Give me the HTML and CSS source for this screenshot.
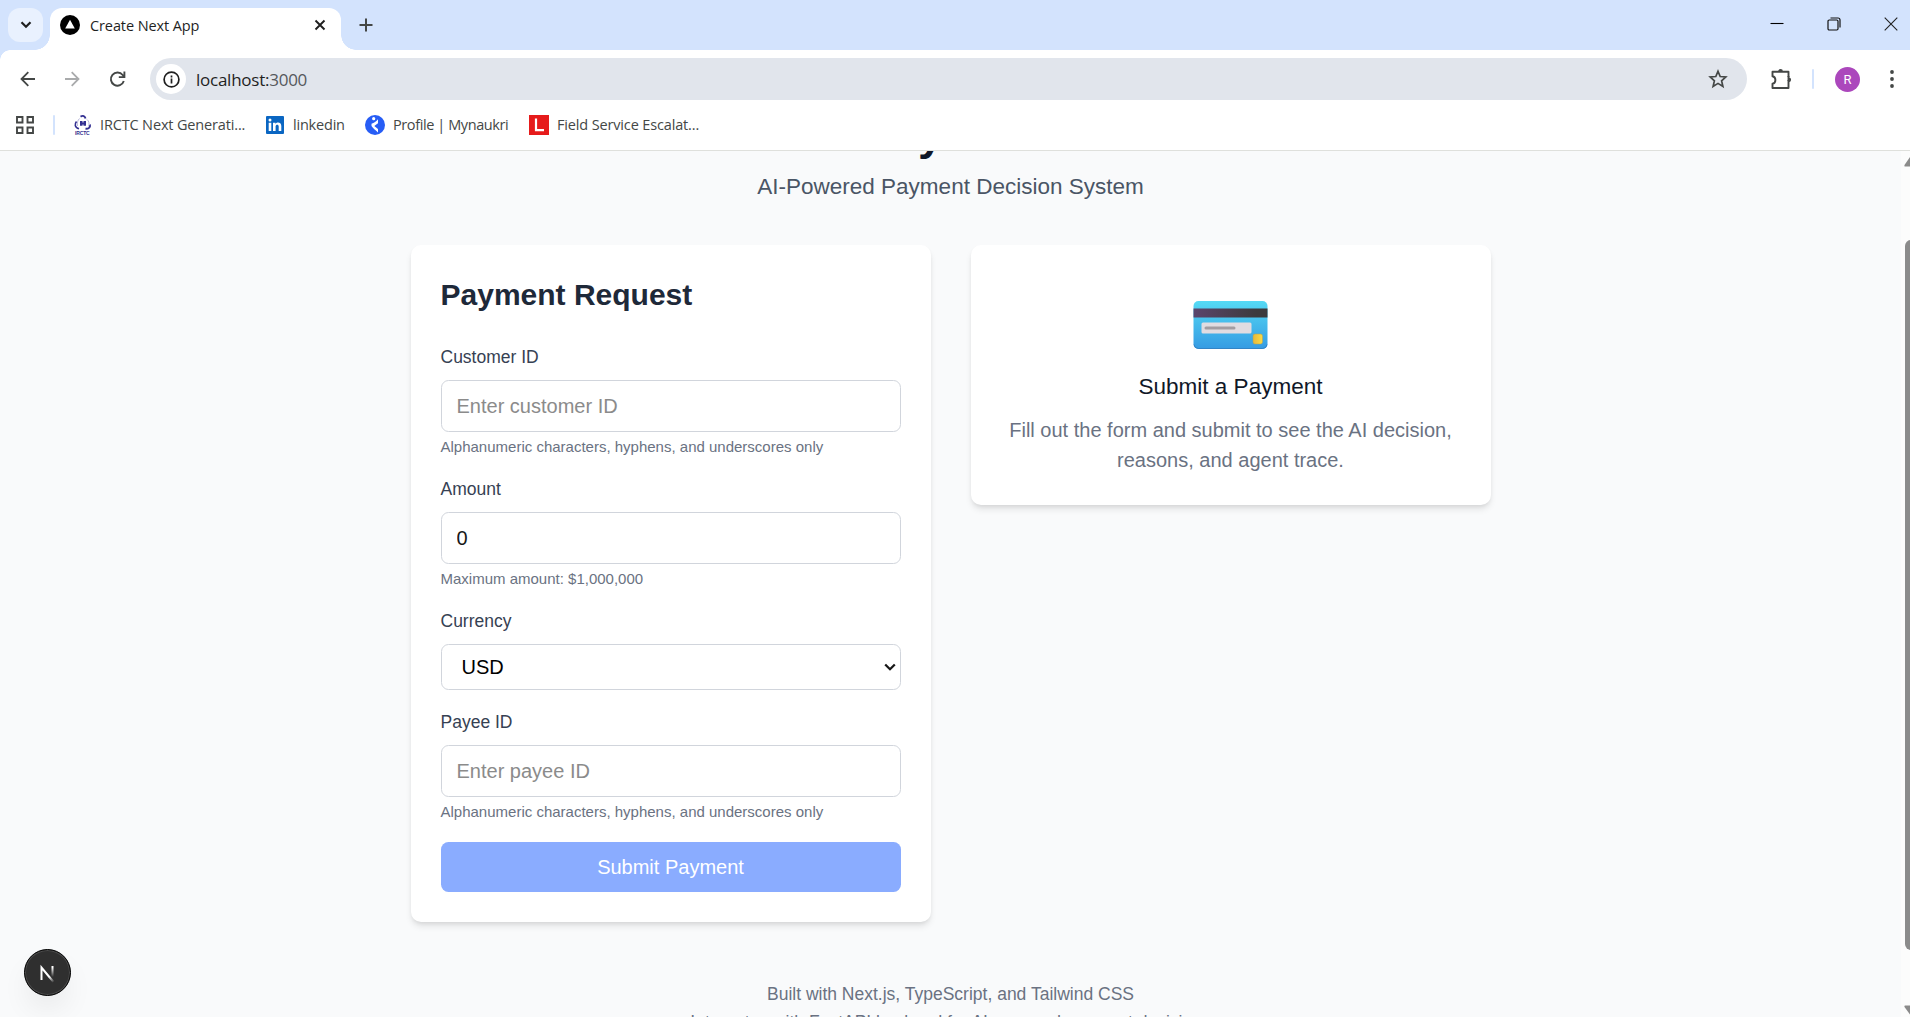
FILE: index.html
```html
<!DOCTYPE html>
<html lang="en">
<head>
<meta charset="utf-8">
<title>Create Next App</title>
<link rel="stylesheet" href="styles.css">
</head>
<body>
<div class="browser">
  <header class="tabstrip">
    <button class="tab-search" aria-label="Search tabs"><svg width="12" height="8" viewBox="0 0 12 8"><path d="M1.500 1.200 6 5.700l4.500-4.500" fill="none" stroke="#1f1f1f" stroke-width="2.200"/></svg></button>
    <div class="tab">
      <svg width="20" height="20" viewBox="0 0 20 20"><circle cx="10" cy="10" r="10" fill="#000"/><path d="M10 4.800 14.800 13.600H5.200z" fill="#fff"/></svg>
      <span class="tab-title">Create Next App</span>
      <svg width="12" height="12" viewBox="0 0 12 12"><path d="M1.500 1.500l9 9m0-9l-9 9" stroke="#1f1f1f" stroke-width="1.900"/></svg>
    </div>
    <svg class="new-tab" width="14" height="14" viewBox="0 0 14 14"><path d="M7 .5v13M.5 7h13" stroke="#444746" stroke-width="2"/></svg>
    <div class="window-controls">
      <svg width="14" height="14" viewBox="0 0 14 14"><path d="M.5 6.500h13" stroke="#000" stroke-width="1.100"/></svg>
      <svg width="14" height="14" viewBox="0 0 14 14" fill="none" stroke="#111" stroke-width="1.200"><rect x="1" y="3" width="10" height="10" rx="1.200"/><path d="M3.500 1h7.500a2 2 0 0 1 2 2v7.500"/></svg>
      <svg width="14" height="14" viewBox="0 0 14 14"><path d="M.7.700l12.600 12.600m0-12.600L.7 13.300" stroke="#222" stroke-width="1.100"/></svg>
    </div>
  </header>

  <div class="toolbar">
    <svg class="nav-icon" width="16" height="16" viewBox="0 0 16 16" fill="none" stroke="#444746" stroke-width="1.800"><path d="M15 8H2M8.300 1.200 1.500 8l6.800 6.800"/></svg>
    <svg class="nav-icon" width="16" height="16" viewBox="0 0 16 16" fill="none" stroke="#a9abac" stroke-width="1.800"><path d="M0 8h13M6.700 1.200 13.500 8l-6.800 6.800"/></svg>
    <svg class="nav-icon" width="16" height="16" viewBox="0 0 16 16" fill="none" stroke="#444746" stroke-width="1.900"><path d="M13.800 10A6.600 6.600 0 1 1 12.700 4L14.100 5.700M14.400.5v5.600H8.800"/></svg>
    <div class="omnibox">
      <span class="site-info"><svg width="17" height="17" viewBox="0 0 17 17"><circle cx="8.500" cy="8.500" r="7.400" fill="none" stroke="#1f1f1f" stroke-width="1.700"/><path d="M8.500 7.600v4.800M8.500 4.600v1.900" stroke="#1f1f1f" stroke-width="1.700"/></svg></span>
      <span class="url">localhost:<span class="port">3000</span></span>
      <svg width="20" height="20" viewBox="0 0 20 20"><path d="M10 2.300l2.200 5.200 5.600.500-4.200 3.800 1.300 5.600-4.900-3-4.900 3 1.300-5.600L2.200 8l5.600-.500z" fill="none" stroke="#444746" stroke-width="1.700"/></svg>
    </div>
    <svg class="extensions" width="22" height="22" viewBox="0 0 22 22"><path d="M18.500 9V3.800h-16v4.400q2.900.5 2.900 3.800t-2.900 3.700V20h16v-8" fill="none" stroke="#444746" stroke-width="1.900" stroke-linejoin="round"/><path d="M18.500 8v5" stroke="#444746" stroke-width="1.900"/><path d="M8.100 3.500a2.400 2.400 0 0 1 4.800 0zM18.700 9.400a2.400 2.400 0 0 1 0 4.800z" fill="#444746"/></svg>
    <i class="divider toolbar-divider"></i>
    <span class="avatar">R</span>
    <svg class="menu" width="4" height="18" viewBox="0 0 4 18" fill="#444746"><circle cx="2" cy="2" r="1.900"/><circle cx="2" cy="9" r="1.900"/><circle cx="2" cy="16" r="1.900"/></svg>
  </div>

  <nav class="bookmarks">
    <svg width="18" height="18" viewBox="0 0 18 18" fill="none" stroke="#444746" stroke-width="1.900"><path d="M1 1h5.500v5.500H1zM11.500 1H17v5.500h-5.500zM1 11.500h5.500V17H1zM11.500 11.500H17V17h-5.500z"/></svg>
    <i class="divider bookmark-divider"></i>
    <a class="bookmark irctc"><svg width="20" height="20" viewBox="0 0 20 20"><g fill="none" stroke="#322f91"><path d="M7.500 1.600C10 .2 12 1 12.500 3.500" stroke-width="1.900"/><path d="M3.500 6.500C1.500 9 1.500 12.500 6 13.800" stroke-width="1.600"/><path d="M17 9.500C17.500 12.500 15.500 14 12.500 13.800" stroke-width="1.900"/><path d="M6.500 3.500C4.500 5.500 4 8 4.500 11M14 4.500c2 1.500 2.500 4 1.500 7" stroke="#b8b7dc"/></g><path d="M7 6h2.500v1.500h1V6H13v4.700h-2.500V9.500h-1v1.200H7z" fill="#322f91"/><text x="2" y="20" class="irctc-text">IRCTC</text></svg><span>IRCTC Next Generati...</span></a>
    <a class="bookmark linkedin"><svg width="18" height="18" viewBox="0 0 18 18"><rect width="18" height="18" rx="1" fill="#0a66c2"/><path d="M2.700 6.800h2.600V15H2.700zM7 6.800h2.500v1.100c1.600-2.200 5.800-1.700 5.800 2.100v5h-2.600v-4.600c0-2.300-3.100-2.200-3.100 0V15H7z" fill="#fff"/><circle cx="4" cy="4" r="1.500" fill="#fff"/></svg><span>linkedin</span></a>
    <a class="bookmark naukri"><svg width="20" height="20" viewBox="0 0 20 20"><circle cx="10" cy="10" r="10" fill="#275df5"/><circle cx="8.700" cy="3.700" r="1.600" fill="#fff"/><path d="M6.500 8.800C9 8 11.300 6.500 13 4.300v4L9.300 11l3.700 3v3.500C10.700 15.300 7.700 13 6.500 11z" fill="#fff"/></svg><span>Profile | Mynaukri</span></a>
    <a class="bookmark field"><svg width="20" height="20" viewBox="0 0 20 20"><path d="M0 0h20v20H0z" fill="#e61b1b"/><path d="M7 3.500v11.700h8" fill="none" stroke="#fff" stroke-width="2.200"/></svg><span>Field Service Escalat...</span></a>
  </nav>

  <div class="viewport">
    <main class="page">
      <h1>PaySafe</h1>
      <p class="subtitle">AI-Powered Payment Decision System</p>
      <div class="cards">
        <form class="card">
          <h2>Payment Request</h2>
          <div class="field-group">
            <label for="customer">Customer ID</label>
            <input id="customer" class="control" type="text" placeholder="Enter customer ID">
            <p class="hint">Alphanumeric characters, hyphens, and underscores only</p>
          </div>
          <div class="field-group">
            <label for="amount">Amount</label>
            <input id="amount" class="control" type="text" value="0">
            <p class="hint">Maximum amount: $1,000,000</p>
          </div>
          <div class="field-group">
            <label for="currency">Currency</label>
            <div class="select-wrap">
              <select id="currency" class="control select"><option>USD</option></select>
              <svg width="12" height="9" viewBox="0 0 12 9"><path d="M1.200 1.500 6 6.200l4.800-4.700" fill="none" stroke="#171717" stroke-width="2.300"/></svg>
            </div>
          </div>
          <div class="field-group">
            <label for="payee">Payee ID</label>
            <input id="payee" class="control" type="text" placeholder="Enter payee ID">
            <p class="hint">Alphanumeric characters, hyphens, and underscores only</p>
          </div>
          <button class="submit" type="button">Submit Payment</button>
        </form>
        <section class="card result">
          <svg class="credit-card" width="75" height="50" viewBox="0 0 75 50">
            <defs>
              <linearGradient id="body" x2="0" y2="1"><stop offset="0" stop-color="#55daf5"/><stop offset=".45" stop-color="#46bdec"/><stop offset="1" stop-color="#359be3"/></linearGradient>
              <linearGradient id="stripe"><stop offset="0" stop-color="#5b456d"/><stop offset=".85" stop-color="#3c3a3d"/></linearGradient>
              <linearGradient id="chip"><stop offset="0" stop-color="#e5b83c"/><stop offset="1" stop-color="#fbdb43"/></linearGradient>
            </defs>
            <rect x=".5" y="1" width="74" height="48" rx="5" fill="url(#body)"/>
            <path d="M1 44.500q.5 4 4.500 4h64q4 0 4.500-4" fill="none" stroke="#3284c6"/>
            <path d="M.5 8.500h74v9H.5z" fill="url(#stripe)"/>
            <rect x="8.500" y="22.500" width="50" height="11" rx="1.500" fill="#e1dce1"/>
            <rect x="11.500" y="26.500" width="31" height="3" rx="1.500" fill="#a39da2"/>
            <rect x="60" y="34" width="9.500" height="10" rx="2" fill="url(#chip)" stroke="#b4a04f" stroke-width=".5"/>
          </svg>
          <h3>Submit a Payment</h3>
          <p>Fill out the form and submit to see the AI decision, reasons, and agent trace.</p>
        </section>
      </div>
      <footer>
        <p>Built with Next.js, TypeScript, and Tailwind CSS</p>
        <p class="integration">Integrates with FastAPI backend for AI-powered payment decisions</p>
      </footer>
    </main>
    <div class="scrollbar">
      <svg width="9" height="10" viewBox="0 0 9 10"><path d="M4 9.500Q3 9.500 3.500 8L9 0v9.500z" fill="#8b8b8b"/></svg>
      <i class="thumb"></i>
      <svg width="9" height="10" viewBox="0 0 9 10"><path d="M4 .5Q3 .5 3.500 2L9 9.500V.5z" fill="#8b8b8b"/></svg>
    </div>
    <div class="dev-badge"><svg width="17" height="19" viewBox="0 0 17 19"><defs><linearGradient id="fade" gradientUnits="userSpaceOnUse" x1="0" y1="2" x2="0" y2="14"><stop offset="0.2" stop-color="#fff"/><stop offset="1" stop-color="#fff" stop-opacity="0"/></linearGradient><linearGradient id="fade-diagonal" gradientUnits="userSpaceOnUse" x1="9" y1="11" x2="15" y2="19"><stop offset="0.3" stop-color="#fff"/><stop offset="1" stop-color="#fff" stop-opacity="0"/></linearGradient></defs><path d="M2.500 17V4.500L14.500 19" fill="none" stroke="url(#fade-diagonal)" stroke-width="2"/><path d="M13.500 3v11" stroke="url(#fade)" stroke-width="2"/></svg></div>
  </div>
</div>
</body>
</html>
```
FILE: styles.css
```css
* { box-sizing: border-box; }
body, h1, h2, h3, p { margin: 0; }
body { overflow: hidden; font-family: "Liberation Sans", Arial, sans-serif; }
svg { display: block; flex: none; overflow: visible; }

.browser { height: 1017px; display: flex; flex-direction: column; background: #fff; }

/* Tab strip */
.tabstrip { height: 50px; flex: none; display: flex; background: #d3e3fd; padding: 8px 0 0 8px; font: 15px "Open Sans", sans-serif; }
.tab-search { width: 35px; height: 34px; border: 0; border-radius: 12px; background: #e9f1fe; padding: 0; display: grid; place-items: center; }
.tab { position: relative; width: 291px; margin-left: 7px; padding: 0 15px 8px 10px; border-radius: 12px 12px 0 0; background: #fff; display: flex; align-items: center; }
.tab::before, .tab::after { content: ""; position: absolute; bottom: 0; width: 15px; height: 15px; }
.tab::before { right: 100%; background: radial-gradient(circle at 0 0, transparent 14.5px, #fff 15px); }
.tab::after { left: 100%; background: radial-gradient(circle at 100% 0, transparent 14.5px, #fff 15px); }
.tab-title { flex: 1; margin-left: 10px; color: #1f1f1f; font-size: 14.5px; letter-spacing: -.1px; }
.new-tab { margin: 10px 0 0 18px; }
.window-controls { margin: 9px 12px 0 auto; display: flex; gap: 43px; }

/* Toolbar */
.toolbar { position: relative; height: 50px; flex: none; display: flex; align-items: center; padding: 8px 16px 0 20px; background: #fff; }
.toolbar::before { content: ""; position: absolute; left: 0; top: 0; width: 10px; height: 10px; background: radial-gradient(circle at 100% 100%, transparent 9.5px, #d3e3fd 10px); }
.nav-icon { margin-right: 29px; margin-top: -1px; }
.omnibox { flex: 1; height: 42px; margin-left: -5px; padding: 0 19px 0 6px; border-radius: 21px; background: #e1e5ec; display: flex; align-items: center; }
.site-info { width: 30px; height: 30px; border-radius: 50%; background: #fff; display: grid; place-items: center; }
.url { flex: 1; margin-left: 10px; font: 17px "Open Sans", sans-serif; letter-spacing: -.25px; color: #1f1f1f; }
.port { color: #55585c; }
.extensions { margin-left: 23px; }
.divider { width: 2px; height: 20px; border-radius: 1px; background: #d3e3fd; }
.toolbar-divider { margin-left: 20px; }
.avatar { width: 25px; height: 25px; margin-left: 21px; border-radius: 50%; background: #ab47bc; color: #fff; font: 13px/25px Roboto, sans-serif; text-align: center; }
.menu { margin-left: 30px; }

/* Bookmarks */
.bookmarks { height: 51px; flex: none; display: flex; align-items: center; border-bottom: 1px solid #dfe0dc; padding-left: 16px; color: #444746; font: 14.5px "Open Sans", sans-serif; }
.bookmark-divider { margin-left: 19px; }
.bookmark { display: flex; align-items: center; gap: 8px; white-space: nowrap; letter-spacing: -.4px; }
.bookmark span { margin-top: -2px; }
.irctc { width: 193px; margin-left: 18px; gap: 7px; letter-spacing: -.15px; }
.linkedin { width: 99px; gap: 9px; letter-spacing: -.2px; }
.naukri { width: 164px; }
.field { letter-spacing: -.15px; }
.irctc-text { font: bold 5px "Liberation Sans", sans-serif; fill: #322f91; }

/* Page */
.viewport { position: relative; flex: 1; min-height: 0; display: flex; overflow: hidden; background: #f9fafb; }
.page { flex: 1; display: flex; flex-direction: column; align-items: center; margin-top: -41px; }
.page h1 { font-size: 45px; line-height: 50px; color: #101828; }
.subtitle { margin-top: 9px; font-size: 22.5px; line-height: 35px; color: #4a5565; }
.cards { width: 1080px; margin-top: 41px; display: grid; grid-template-columns: 1fr 1fr; gap: 40px; align-items: start; }
.card { padding: 30px; border-radius: 10px; background: #fff; box-shadow: 0 5px 7.5px -1px rgba(0, 0, 0, .1), 0 2.5px 5px -2.5px rgba(0, 0, 0, .1); }
.card h2 { margin-bottom: 30px; font-size: 30px; line-height: 40px; color: #1e2939; }
.field-group { margin-bottom: 20px; }
.field-group label { display: block; margin-bottom: 10px; font-size: 17.5px; line-height: 25px; color: #364153; }
.control { display: block; width: 100%; height: 52px; padding: 10px 15px; border: 1px solid #d1d5dc; border-radius: 7.5px; background: #fff; color: #171717; font: 20px "Liberation Sans", Arial, sans-serif; }
.control::placeholder { color: #8b8b8b; opacity: 1; }
.hint { margin-top: 5px; font-size: 15px; line-height: 20px; color: #6a7282; }
.select-wrap { display: grid; align-items: center; }
.select-wrap > * { grid-area: 1 / 1; }
.select-wrap svg { justify-self: end; margin: 1px 5px 0 0; pointer-events: none; }
.select { height: 46px; padding: 0 20px; appearance: none; color: #000; }
.submit { display: block; width: 100%; height: 50px; border: 0; border-radius: 7.5px; background: #8aacff; color: #fff; font: 20px "Liberation Sans", Arial, sans-serif; }
.result { height: 260px; display: flex; flex-direction: column; align-items: center; text-align: center; }
.credit-card { margin-top: 25px; }
.result h3 { margin-top: 19px; font-size: 22.5px; font-weight: 400; line-height: 35px; color: #101828; }
.result p { margin-top: 11px; font-size: 20px; line-height: 30px; color: #6a7282; }
footer { margin-top: 60px; text-align: center; font-size: 17.5px; line-height: 25px; color: #6a7282; }
.integration { margin-top: 3px; }

.scrollbar { width: 9px; flex: none; display: flex; flex-direction: column; justify-content: space-between; padding: 6px 0 2px; background: #fcfcfc; overflow: hidden; }
.thumb { width: 12px; height: 710px; margin: 17px 0 0 4px; border-radius: 6px; background: #8b8b8b; }
.dev-badge { position: absolute; left: 24px; bottom: 21px; width: 47px; height: 47px; border-radius: 50%; background: #2f2f2f; border: 1px solid #000; box-shadow: inset 0 0 0 1px #4a4a4a, 0 16px 32px -8px rgba(0, 0, 0, .12); display: grid; place-items: center; }
```
